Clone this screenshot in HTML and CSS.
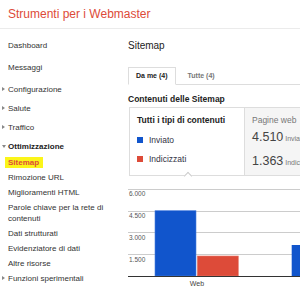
FILE: index.html
```html
<!DOCTYPE html>
<html>
<head>
  <meta charset="utf-8">
  <title>Strumenti per i Webmaster - Sitemap</title>
  <link rel="stylesheet" href="styles.css">
</head>
<body>
  <div class="header">
    <span class="logo">Strumenti per i Webmaster</span>
  </div>

  <div class="page">
    <nav class="nav">
      <div class="nav-item big">Dashboard</div>
      <div class="nav-item big last">Messaggi</div>
      <div class="nav-item arrowed"><span class="arrow"></span>Configurazione</div>
      <div class="nav-item arrowed"><span class="arrow"></span>Salute</div>
      <div class="nav-item arrowed"><span class="arrow"></span>Traffico</div>
      <div class="nav-item arrowed open"><span class="arrow down"></span>Ottimizzazione</div>
      <div class="sub-item active"><span class="highlight">Sitemap</span></div>
      <div class="sub-item">Rimozione URL</div>
      <div class="sub-item">Miglioramenti HTML</div>
      <div class="sub-item">Parole chiave per la rete di contenuti</div>
      <div class="sub-item">Dati strutturati</div>
      <div class="sub-item">Evidenziatore di dati</div>
      <div class="sub-item">Altre risorse</div>
      <div class="nav-item arrowed labs"><span class="arrow"></span>Funzioni sperimentali</div>
    </nav>

    <main class="main">
      <h2>Sitemap</h2>

      <div class="tabs">
        <div class="tab selected">Da me (4)</div>
        <div class="tab">Tutte (4)</div>
      </div>

      <h3>Contenuti delle Sitemap</h3>

      <div class="card">
        <div class="panel types">
          <div class="panel-title">Tutti i tipi di contenuti</div>
          <div class="legend"><span class="swatch blue"></span>Inviato</div>
          <div class="legend"><span class="swatch red"></span>Indicizzati</div>
          <span class="caret"></span>
        </div>
        <div class="panel pages">
          <div class="panel-label">Pagine web</div>
          <div class="stat"><span class="num">4.510</span> Inviati</div>
          <div class="stat"><span class="num">1.363</span> Indicizzati</div>
        </div>
      </div>

      <svg class="chart" width="172" height="113" viewBox="0 0 172 113">
        <g stroke="#cccccc" stroke-width="1">
          <line x1="0" y1="13.5" x2="172" y2="13.5"/>
          <line x1="0" y1="35.5" x2="172" y2="35.5"/>
          <line x1="0" y1="56.5" x2="172" y2="56.5"/>
          <line x1="0" y1="78.5" x2="172" y2="78.5"/>
        </g>
        <g class="axis-label">
          <text x="1" y="19.6">6.000</text>
          <text x="1" y="42">4.500</text>
          <text x="1" y="64">3.000</text>
          <text x="1" y="85.6">1.500</text>
        </g>
        <rect x="27" y="34.7" width="41" height="65.3" fill="#1155cc" stroke="#4a7fdc" stroke-width="0.6"/>
        <rect x="69.3" y="80" width="41" height="20" fill="#dd4b39" stroke="#e77a6c" stroke-width="0.6"/>
        <rect x="163.7" y="69" width="41" height="31" fill="#1155cc"/>
        <line x1="0" y1="100.5" x2="172" y2="100.5" stroke="#333333" stroke-width="1"/>
        <text class="cat-label" x="69" y="109.5" text-anchor="middle">Web</text>
      </svg>
    </main>
  </div>
</body>
</html>
```

FILE: styles.css
```css
* {
  box-sizing: border-box;
}

body {
  margin: 0;
  width: 300px;
  height: 289px;
  overflow: hidden;
  background: #ffffff;
  font-family: 'Liberation Sans', Arial, sans-serif;
  color: #333;
}

.header {
  height: 29px;
  padding: 4px 0 0 8px;
  border-bottom: 1px solid #ebebeb;
}

.logo {
  font-size: 12px;
  line-height: 12px;
  color: #dd4b39;
  white-space: nowrap;
}

.page {
  display: flex;
}

/* left navigation */

.nav {
  width: 120px;
  flex: none;
  padding-top: 5px;
  font-size: 8px;
  line-height: 11px;
}

.nav-item {
  padding: 4px 0 4px 8px;
  color: #333;
}

.nav-item.big {
  padding-top: 5.5px;
  padding-bottom: 5.5px;
}

.nav-item.last {
  margin-bottom: 1.5px;
}

.nav-item.arrowed {
  padding-left: 2px;
}

.nav-item.open {
  font-weight: bold;
  color: #222;
  padding-bottom: 3px;
}

.nav-item.labs {
  margin-top: -2px;
}

.arrow {
  display: inline-block;
  width: 6px;
  height: 5px;
  vertical-align: 0;
}

.arrow::before {
  content: "";
  display: block;
  width: 0;
  height: 0;
  border-left: 3px solid #888;
  border-top: 2.5px solid transparent;
  border-bottom: 2.5px solid transparent;
}

.arrow.down::before {
  border-top: 3px solid #888;
  border-left: 2.5px solid transparent;
  border-right: 2.5px solid transparent;
  border-bottom: 0;
  margin-top: 1px;
}

.sub-item {
  padding: 2px 4px 2px 8px;
  color: #333;
}

.sub-item.active {
  font-weight: bold;
  color: #dd4b39;
}

.highlight {
  background: #fbf51a;
  margin-left: -3px;
  padding: 1px 4px 1px 3px;
}

/* main area */

.main {
  flex: 1;
  min-width: 0;
  overflow: hidden;
  padding: 11px 0 0 8px;
}

h2 {
  margin: 0;
  font-size: 10px;
  line-height: 12px;
  font-weight: normal;
  color: #222;
}

.tabs {
  display: flex;
  margin-top: 15px;
  border-bottom: 1px solid #dddddd;
  font-size: 7px;
  font-weight: bold;
  white-space: nowrap;
}

.tab {
  padding: 0 12px;
  line-height: 16px;
  border-top: 1px solid transparent;
  color: #777;
}

.tab.selected {
  padding: 0 7px;
  border: 1px solid #dddddd;
  border-bottom-color: #ffffff;
  margin-bottom: -1px;
  background: #ffffff;
  color: #222;
}

h3 {
  margin: 9px 0 0 0;
  font-size: 8.5px;
  line-height: 10px;
  font-weight: bold;
  color: #222;
  white-space: nowrap;
}

.card {
  display: flex;
  height: 69px;
  margin-top: 3px;
  margin-left: 1px;
  white-space: nowrap;
}

.panel {
  border-top: 1px solid #dddddd;
  border-bottom: 1px solid #dddddd;
}

.types {
  position: relative;
  width: 116px;
  flex: none;
  padding: 7px 0 0 7px;
  border-left: 1px solid #dddddd;
  border-right: 1px solid #dddddd;
  background: #ffffff;
}

.panel-title {
  font-size: 8.5px;
  line-height: 10px;
  font-weight: bold;
  color: #222;
}

.legend {
  display: flex;
  align-items: center;
  gap: 6px;
  margin-top: 10px;
  font-size: 8.5px;
  line-height: 10px;
  color: #333344;
}

.legend + .legend {
  margin-top: 9px;
}

.swatch {
  width: 6px;
  height: 6px;
}

.swatch.blue {
  background: #1155cc;
}

.swatch.red {
  background: #dd4b39;
}

.caret {
  position: absolute;
  left: 55px;
  bottom: -4px;
  width: 6px;
  height: 6px;
  background: #ffffff;
  border-top: 1px solid #cccccc;
  border-left: 1px solid #cccccc;
  transform: rotate(45deg);
}

.pages {
  flex: 1;
  padding: 7px 0 0 7px;
  background: #f5f5f5;
}

.panel-label {
  font-size: 8.5px;
  line-height: 10px;
  color: #777;
}

.stat {
  margin-top: 5px;
  font-size: 7px;
  line-height: 14px;
  color: #777;
}

.stat + .stat {
  margin-top: 8px;
}

.num {
  font-size: 12.5px;
  color: #444;
}

.chart {
  display: block;
}

.axis-label text {
  font-size: 6.5px;
  fill: #555;
}

.cat-label {
  font-size: 7px;
  fill: #444;
}
```
